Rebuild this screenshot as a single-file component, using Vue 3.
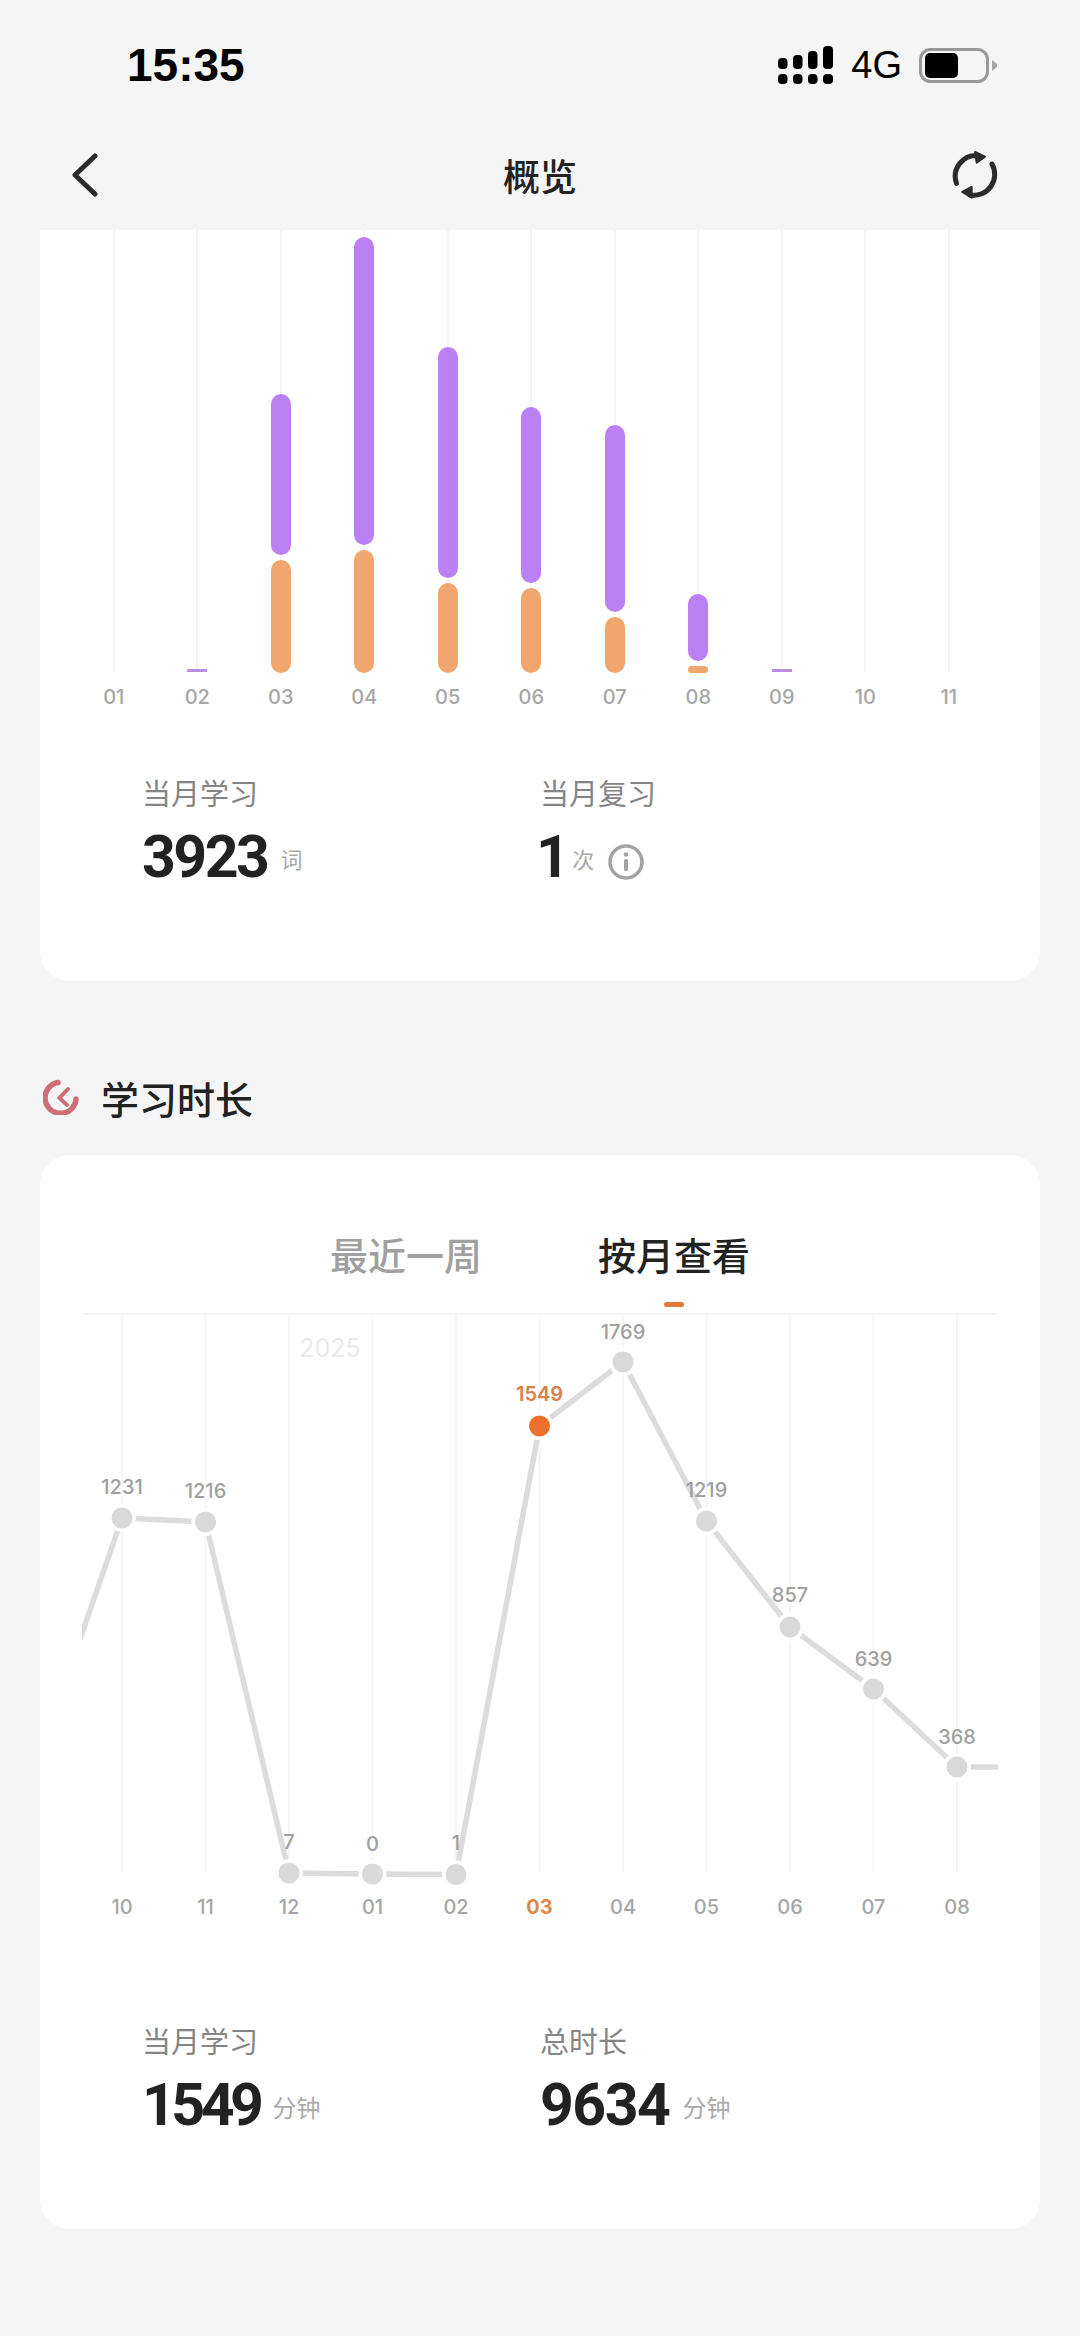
<template>
  <div class="page">
    <div class="status-bar">
      <span class="time">15:35</span>
      <div class="status-right">
        <svg class="signal" width="55" height="38" viewBox="0 0 55 38">
          <rect x="0" y="12" width="9.500" height="11" rx="4" />
          <rect x="15" y="9" width="9.500" height="14" rx="4" />
          <rect x="30" y="5" width="9.500" height="18" rx="4" />
          <rect x="45" y="0" width="10" height="23" rx="4" />
          <rect x="0" y="28" width="9.500" height="10" rx="4" />
          <rect x="15" y="28" width="9.500" height="10" rx="4" />
          <rect x="30" y="28" width="9.500" height="10" rx="4" />
          <rect x="45" y="28" width="10" height="10" rx="4" />
        </svg>
        <span class="network">4G</span>
        <svg class="battery" width="79" height="35" viewBox="0 0 79 35">
          <rect x="1.500" y="1.500" width="67" height="32" rx="10" fill="none" stroke="#999" stroke-width="3" />
          <rect x="6" y="5" width="33" height="25" rx="5" fill="#000" />
          <path d="M73 12l5 4v3l-5 4z" fill="#a5a5a5" />
        </svg>
      </div>
    </div>

    <div class="nav-bar">
      <div class="nav-side">
        <svg class="back" width="30" height="44" viewBox="0 0 30 44">
          <path d="M25 3L5 22l20 19" />
        </svg>
      </div>
      <span class="nav-title">概览</span>
      <div class="nav-side right">
        <svg class="refresh" width="50" height="50" viewBox="0 0 50 50">
          <path d="M6.500 33.500A21 21 0 0 1 28 5.500" />
          <path d="M42 14A21 21 0 0 1 20 45" />
          <path class="head" d="M35 6.700L25 2l1.700 10.700z" />
          <path class="head" d="M12.300 42l9.400-5v10.700z" />
        </svg>
      </div>
    </div>

    <section class="card card-top">
      <div class="bar-chart">
        <div v-for="col in barData" :key="col.label" class="bar-col">
          <div class="bar-plot">
            <i class="grid-line"></i>
            <template v-if="col.thin">
              <i class="bar-thin"></i>
            </template>
            <template v-else-if="col.purple">
              <i class="bar purple" :style="{ height: col.purple + 'px' }"></i>
              <i class="bar orange" :style="{ height: col.orange + 'px' }"></i>
            </template>
          </div>
          <span class="axis-label">{{ col.label }}</span>
        </div>
      </div>

      <div class="stats">
        <div class="stat">
          <div class="stat-label">当月学习</div>
          <div class="stat-row">
            <span class="stat-num">3923</span>
            <span class="stat-unit small">词</span>
          </div>
        </div>
        <div class="stat">
          <div class="stat-label">当月复习</div>
          <div class="stat-row">
            <span class="stat-num single">1</span>
            <span class="stat-unit small">次</span>
            <svg class="info" width="36" height="36" viewBox="0 0 36 36">
              <circle cx="18" cy="18" r="16" fill="none" stroke="#a3a3a3" stroke-width="3.500" />
              <circle cx="18" cy="10.500" r="2.200" fill="#a3a3a3" />
              <rect x="16" y="15" width="4" height="12" rx="1.500" fill="#a3a3a3" />
            </svg>
          </div>
        </div>
      </div>
    </section>

    <div class="section-title">
      <svg width="36" height="36" viewBox="0 0 36 36" fill="none" stroke="#cd6f78" stroke-linecap="round">
        <path d="M15 3.500A15.500 15.500 0 1 0 33 20" stroke-width="5.500" />
        <path d="M25 10l-8.500 9 7.500 7" stroke-width="4" />
      </svg>
      <span>学习时长</span>
    </div>

    <section class="card">
      <div class="tabs">
        <div v-for="tab in tabs" :key="tab" class="tab" :class="{ active: tab === activeTab }">
          <span>{{ tab }}</span>
          <i class="tab-mark"></i>
        </div>
      </div>

      <svg class="line-chart" width="916" height="610" viewBox="82 1315 916 610">
        <line v-for="p in points" :key="'g' + p.x" :x1="p.x" :x2="p.x" y1="1317" y2="1872" class="grid" />
        <text x="330" y="1357" class="year">2025</text>
        <polyline :points="linePoints" class="trend" />
        <template v-for="p in points" :key="p.label + p.x">
          <circle :cx="p.x" :cy="p.y" r="14" fill="#fff" />
          <circle :cx="p.x" :cy="p.y" r="10.500" :fill="p.current ? '#ec6f2b' : '#d9d9d9'" />
          <text :x="p.x" :y="p.labelY" class="value" :class="{ current: p.current }">{{ p.value }}</text>
          <text :x="p.x" y="1914" class="month" :class="{ current: p.current }">{{ p.label }}</text>
        </template>
      </svg>

      <div class="stats stats-time">
        <div class="stat">
          <div class="stat-label">当月学习</div>
          <div class="stat-row">
            <span class="stat-num tight">1549</span>
            <span class="stat-unit">分钟</span>
          </div>
        </div>
        <div class="stat">
          <div class="stat-label">总时长</div>
          <div class="stat-row">
            <span class="stat-num loose">9634</span>
            <span class="stat-unit">分钟</span>
          </div>
        </div>
      </div>
    </section>
  </div>
</template>

<script setup>
import { computed, ref } from 'vue'

const barData = [
  { label: '01' },
  { label: '02', thin: true },
  { label: '03', purple: 161, orange: 113 },
  { label: '04', purple: 308, orange: 123 },
  { label: '05', purple: 231, orange: 90 },
  { label: '06', purple: 176, orange: 85 },
  { label: '07', purple: 187, orange: 56 },
  { label: '08', purple: 67, orange: 7 },
  { label: '09', thin: true },
  { label: '10' },
  { label: '11' }
]

const tabs = ['最近一周', '按月查看']
const activeTab = ref('按月查看')

const monthData = [
  { label: '10', value: 1231, y: 1518, labelY: 1494 },
  { label: '11', value: 1216, y: 1522, labelY: 1498 },
  { label: '12', value: 7, y: 1873, labelY: 1849 },
  { label: '01', value: 0, y: 1874, labelY: 1851 },
  { label: '02', value: 1, y: 1874.5, labelY: 1850 },
  { label: '03', value: 1549, y: 1426, labelY: 1401, current: true },
  { label: '04', value: 1769, y: 1362, labelY: 1339 },
  { label: '05', value: 1219, y: 1521, labelY: 1497 },
  { label: '06', value: 857, y: 1627, labelY: 1602 },
  { label: '07', value: 639, y: 1689, labelY: 1666 },
  { label: '08', value: 368, y: 1767, labelY: 1744 }
]

const points = monthData.map((item, i) => ({ ...item, x: 122 + i * 83.5 }))

const linePoints = computed(() => {
  const middle = points.map((p) => `${p.x},${p.y}`).join(' ')
  return `70,1668 ${middle} 1010,1767`
})
</script>

<style>
html, body {
  background: #f5f5f5;
}
</style>

<style scoped>
.page {
  width: 1080px;
  height: 2336px;
  overflow: hidden;
  background: #f5f5f5;
  font-family: "Inter", "Noto Sans CJK SC", sans-serif;
  color: #222;
}

.status-bar {
  height: 130px;
  padding: 0 82px 0 127px;
  box-sizing: border-box;
  display: flex;
  align-items: center;
  justify-content: space-between;
}

.time {
  font-family: "Liberation Sans", sans-serif;
  font-size: 46px;
  font-weight: 700;
  color: #000;
}

.status-right {
  display: flex;
  align-items: center;
  gap: 18px;
}

.network {
  font-family: "Liberation Sans", sans-serif;
  font-size: 38px;
  color: #000;
  margin-right: -1px;
}

.nav-bar {
  height: 90px;
  margin-bottom: 10px;
  padding: 0 80px 0 70px;
  display: flex;
  align-items: center;
  box-sizing: border-box;
}

.nav-side {
  flex: 1;
  display: flex;
  align-items: center;
}

.nav-side.right {
  justify-content: flex-end;
}

.nav-title {
  margin-left: 10px;
  font-size: 37px;
  font-weight: 500;
  color: #222;
}

.back path,
.refresh path {
  fill: none;
  stroke: #2b2b2b;
  stroke-width: 5;
  stroke-linecap: round;
  stroke-linejoin: round;
}

.refresh path.head {
  fill: #2b2b2b;
  stroke-width: 2;
}

.card {
  margin: 0 40px;
  background: #fff;
  border-radius: 30px;
}

.card-top {
  border-radius: 0 0 30px 30px;
}

.bar-chart {
  display: flex;
  padding-left: 32px;
}

.bar-col {
  flex: 0 0 83.5px;
  display: flex;
  flex-direction: column;
  align-items: center;
}

.bar-plot {
  position: relative;
  width: 100%;
  height: 443px;
  display: flex;
  flex-direction: column;
  align-items: center;
  justify-content: flex-end;
  gap: 5px;
}

.grid-line {
  position: absolute;
  top: 0;
  bottom: 0;
  left: 50%;
  width: 2px;
  margin-left: -1px;
  background: #f5f5f5;
}

.bar {
  position: relative;
  width: 20px;
  border-radius: 10px;
}

.bar.purple {
  background: #bc80f5;
}

.bar.orange {
  background: #f0a66c;
}

.bar-thin {
  position: relative;
  width: 20px;
  height: 3px;
  margin-bottom: 1px;
  background: #b98de0;
}

.axis-label {
  margin-top: 10px;
  font-size: 20px;
  font-weight: 500;
  line-height: 28px;
  color: #a6a6a6;
}

.stats {
  display: flex;
  margin-top: 64px;
  padding: 0 0 95px 102px;
}

.stats-time {
  margin-top: 98px;
}

.stat {
  width: 398px;
}

.stat-label {
  font-size: 29px;
  line-height: 40px;
  color: #858585;
}

.stat-row {
  margin-top: 11px;
  height: 60px;
  display: flex;
  align-items: center;
}

.stat-num {
  font-family: "Roboto", sans-serif;
  font-size: 59px;
  font-weight: 700;
  letter-spacing: -2.500px;
  color: #222;
}

.stat-num.single {
  margin: 0 -8px 0 -4px;
}

.stat-num.tight {
  letter-spacing: -4.500px;
}

.stat-num.loose {
  letter-spacing: -1.500px;
}

.stat-unit {
  margin: 4px 0 0 13px;
  font-size: 24px;
  color: #aaa;
}

.stat-unit.small {
  font-size: 22px;
}

.info {
  margin: 11px 0 0 14px;
}

.section-title {
  height: 50px;
  margin: 91px 0 33px 43px;
  display: flex;
  align-items: center;
  gap: 22px;
  font-size: 38px;
  font-weight: 500;
  color: #222;
}

.tabs {
  height: 160px;
  margin: 0 42px;
  padding-top: 76px;
  box-sizing: border-box;
  display: flex;
  justify-content: center;
  gap: 116px;
  border-bottom: 2px solid #f5f5f5;
}

.tab {
  display: flex;
  flex-direction: column;
  align-items: center;
  font-size: 38px;
  line-height: 50px;
  font-weight: 500;
  color: #a0a0a0;
}

.tab.active {
  color: #222;
}

.tab-mark {
  width: 20px;
  height: 5px;
  margin-top: 21px;
  border-radius: 3px;
}

.tab.active .tab-mark {
  background: #e07a3a;
}

.line-chart {
  display: block;
  margin: 0 42px;
}

.grid {
  stroke: #f5f5f5;
  stroke-width: 2;
}

.trend {
  fill: none;
  stroke: #dcdcdc;
  stroke-width: 5.500;
}

.year {
  font-size: 25px;
  text-anchor: middle;
  fill: #e9e9e9;
}

.value {
  font-size: 20px;
  font-weight: 500;
  text-anchor: middle;
  fill: #a0a0a0;
}

.value.current {
  font-weight: 600;
  fill: #d9814a;
}

.month {
  font-size: 20px;
  font-weight: 500;
  text-anchor: middle;
  fill: #a6a6a6;
}

.month.current {
  font-weight: 700;
  fill: #dd8a45;
}
</style>
